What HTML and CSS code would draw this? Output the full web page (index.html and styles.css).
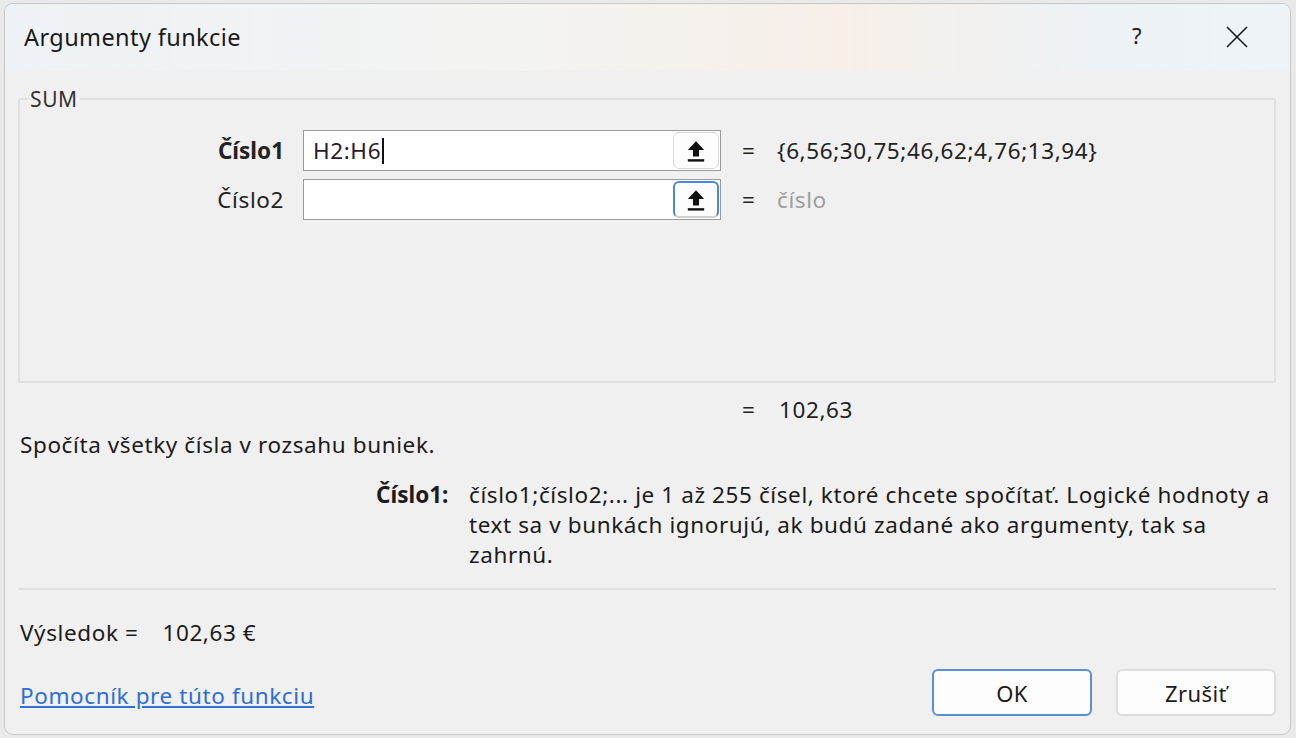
FILE: index.html
```html
<!DOCTYPE html>
<html lang="sk">
<head>
  <meta charset="UTF-8">
  <title>Argumenty funkcie</title>
  <link rel="stylesheet" href="styles.css">
</head>
<body>

  <div class="dialog">
    <div class="titlebar">
      <span class="title">Argumenty funkcie</span>
      <span class="help">?</span>
      <span class="close">
        <svg width="22" height="22" viewBox="0 0 22 22"><path d="M1 1 L21 21 M21 1 L1 21" stroke="#1a1a1a" stroke-width="1.6" fill="none"/></svg>
      </span>
    </div>

    <div class="content">
      <fieldset class="group">
        <legend>SUM</legend>

        <div class="arg-row">
          <label class="arg-label bold">Číslo1</label>
          <div class="arg-input">
            <span class="arg-text">H2:H6<span class="caret"></span></span>
            <span class="pick">
              <svg width="22" height="24" viewBox="0 0 20 22"><path d="M10 2 L2.5 10 H7.2 V16 H12.8 V10 H17.5 Z" fill="#111"/><rect x="2.5" y="18.5" width="15" height="2.2" fill="#111"/></svg>
            </span>
          </div>
          <span class="eq">=</span>
          <span class="arg-value">{6,56;30,75;46,62;4,76;13,94}</span>
        </div>

        <div class="arg-row">
          <label class="arg-label">Číslo2</label>
          <div class="arg-input">
            <span class="arg-text"></span>
            <span class="pick focus">
              <svg width="22" height="24" viewBox="0 0 20 22"><path d="M10 2 L2.5 10 H7.2 V16 H12.8 V10 H17.5 Z" fill="#111"/><rect x="2.5" y="18.5" width="15" height="2.2" fill="#111"/></svg>
            </span>
          </div>
          <span class="eq">=</span>
          <span class="arg-value muted">číslo</span>
        </div>
      </fieldset>

      <div class="total-row">
        <span class="eq">=</span>
        <span class="arg-value">102,63</span>
      </div>

      <p class="summary">Spočíta všetky čísla v rozsahu buniek.</p>

      <div class="arg-help">
        <span class="help-label">Číslo1:</span>
        <span class="help-text">číslo1;číslo2;... je 1 až 255 čísel, ktoré chcete spočítať. Logické hodnoty a text sa v bunkách ignorujú, ak budú zadané ako argumenty, tak sa zahrnú.</span>
      </div>

      <hr class="sep">

      <div class="result">Výsledok =<span class="result-value">102,63 €</span></div>

      <div class="footer">
        <a class="help-link" href="#">Pomocník pre túto funkciu</a>
        <div class="buttons">
          <button class="btn primary">OK</button>
          <button class="btn">Zrušiť</button>
        </div>
      </div>
    </div>
  </div>

</body>
</html>
```

FILE: styles.css
```css
body {
  margin: 0;
  background: #e9e9e9;
  font-family: 'Noto Sans', 'Open Sans', sans-serif;
  color: #1b1b1b;
  font-size: 22.5px;
  letter-spacing: 0.6px;
}
.dialog {
  margin: 3px 0 0 4px;
  width: 1287px;
  height: 732px;
  box-sizing: border-box;
  background: #f0f0f0;
  border: 1px solid #c9c9c9;
  border-radius: 9px;
  overflow: hidden;
  display: flex;
  flex-direction: column;
}
.titlebar {
  height: 67px;
  flex: none;
  display: flex;
  align-items: center;
  background: linear-gradient(90deg, #eef2f6 0%, #f3f3f1 40%, #f7efe8 65%, #edf2f6 85%, #eef3f7 100%);
}
.title {
  margin-left: 19px;
  font-size: 23.5px;
  letter-spacing: 0.4px;
  color: #1a1a1a;
  flex: 1;
  padding-bottom: 2px;
}
.help {
  font-size: 22px;
  width: 24px;
  margin-right: 70px;
  padding-bottom: 6px;
}
.close {
  display: flex;
  margin-right: 42px;
  padding-bottom: 2px;
}
.content {
  flex: 1;
  padding: 0 14px 0 13px;
  display: flex;
  flex-direction: column;
}
.group {
  margin: 14px 0 0 0;
  padding: 17px 0 0 0;
  height: 298px;
  border: 2px solid #e0e0e0;
  border-radius: 2px;
  box-sizing: border-box;
}
.group legend {
  padding: 0 2px;
  margin-left: 8px;
  font-size: 21px;
  color: #333;
}
.arg-row {
  display: flex;
  align-items: center;
  height: 41px;
  margin-bottom: 8px;
}
.arg-label {
  width: 283px;
  text-align: right;
  padding-right: 19px;
  box-sizing: border-box;
  color: #222;
}
.bold {
  font-weight: bold;
  letter-spacing: 0;
}
.arg-input {
  width: 418px;
  height: 41px;
  box-sizing: border-box;
  border: 1px solid #9b9b9b;
  background: #fff;
  display: flex;
  align-items: center;
  padding: 1px;
}
.arg-text {
  flex: 1;
  padding-left: 8px;
  color: #2a1a2a;
  display: flex;
  align-items: center;
}
.caret {
  display: inline-block;
  width: 2px;
  height: 26px;
  background: #111;
  margin-left: 1px;
}
.pick {
  width: 46px;
  height: 37px;
  box-sizing: border-box;
  border: 1px solid #d8d8d8;
  border-radius: 6px;
  background: #fdfdfd;
  display: flex;
  align-items: center;
  justify-content: center;
}
.pick.focus {
  border: 2px solid #cfcfcf;
  border-top-color: #4a89dc;
  border-left-color: #4a89dc;
  border-right-color: #4a89dc;
}
.eq {
  width: 24px;
  margin-left: 21px;
  color: #222;
}
.arg-value {
  margin-left: 11px;
  color: #222;
}
.muted {
  color: #9e9e9e;
}
.total-row {
  display: flex;
  align-items: center;
  margin-top: 11px;
  padding-left: 703px;
}
.total-row .arg-value {
  margin-left: 13px;
}
.summary {
  margin: 4px 0 0 2px;
}
.arg-help {
  display: flex;
  margin-top: 20px;
  padding-left: 358px;
  padding-right: 4px;
  line-height: 30px;
}
.help-label {
  font-weight: bold;
  letter-spacing: 0;
  width: 93px;
  flex: none;
}
.help-text {
  flex: 1;
}
.sep {
  margin: 18px 0 0 1px;
  border: none;
  border-top: 2px solid #dedede;
}
.result {
  margin: 27px 0 0 2px;
}
.result-value {
  margin-left: 24px;
}
.footer {
  display: flex;
  align-items: center;
  margin-top: 21px;
}
.help-link {
  flex: 1;
  margin-left: 2px;
  color: #2f6fd1;
  text-decoration: underline;
  padding-top: 6px;
}
.buttons {
  display: flex;
  gap: 24px;
}
.btn {
  width: 160px;
  height: 47px;
  font-family: inherit;
  font-size: 22px;
  letter-spacing: 0.4px;
  color: #1b1b1b;
  background: #fdfdfd;
  border: 2px solid #dcdcdc;
  border-radius: 6px;
}
.btn.primary {
  border-color: #5a8fd8;
}
```
